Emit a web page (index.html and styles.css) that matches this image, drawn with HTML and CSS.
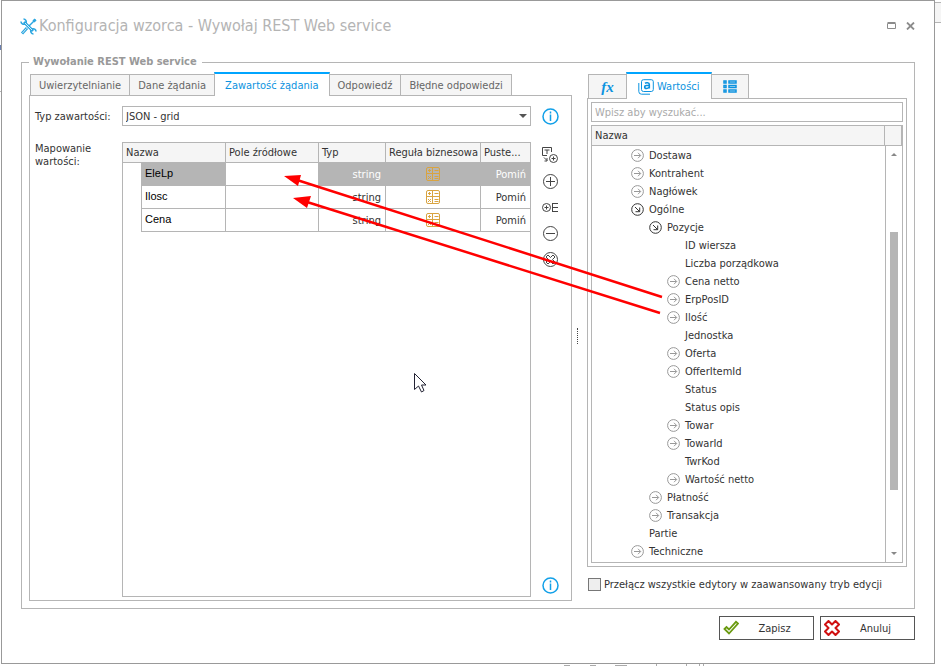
FILE: index.html
```
<!DOCTYPE html>
<html lang="pl">
    <head>
        <meta charset="UTF-8">
        <meta name="viewport" content="width=device-width, initial-scale=1.0">
        <title>Konfiguracja wzorca</title>
        <link rel="stylesheet" href="styles.css">
    </head>
    <body>
        <svg class="defs" width="0" height="0">
            <symbol id="closed" viewBox="0 0 13 13">
                <circle cx="6.5" cy="6.5" r="5.9"/>
                <path d="M3 6.5h6.5M7 3.8l2.7 2.7L7 9.2"/>
            </symbol>
            <symbol id="open" viewBox="0 0 13 13">
                <circle cx="6.5" cy="6.5" r="5.8"/>
                <path d="M4 4l4.5 4.5M8.7 4.5v4.2H4.5"/>
            </symbol>
            <symbol id="info" viewBox="0 0 17 17">
                <circle cx="8.5" cy="8.5" r="7.5"/>
                <path d="M8.5 3.5v2M8.5 6.5v6.5"/>
            </symbol>
            <symbol id="rule" viewBox="0 0 16 16">
                <rect x="1.5" y="1.5" width="13" height="13" rx="1.5"/>
                <path d="M7.5 1v14M1 7.500h14M3 4.500h3M4.500 3v3M9.500 4.500h4M3 10l3 3M6 10l-3 3M9.500 10.500h4M9.500 12.500h4"/>
            </symbol>
        </svg>
        <!-- parts of the main window that show round the dialog -->
        <div class="behind-right"></div>
        <div class="behind-left"></div>
        <svg class="behind-bottom" width="180" height="2" viewBox="0 0 180 2"><path d="M4 1.500h6M30 1.500h6M55 1.500h12M96.500 0v2M126.500 0v2M139.500 0v2M143.500 0v2"/></svg>
        <div class="dialog">
            <header class="title-bar">
                <svg class="tools" width="17" height="17" viewBox="0 0 17 17">
                    <path d="M4 4l9 9" stroke-width="3"/>
                    <path d="M1 3.500a2.800 2.800 0 0 0 4 2.500M3.500 1a2.800 2.800 0 0 1 2.500 4M11 12a2.800 2.800 0 0 0 2.500 4M12 11a2.800 2.800 0 0 1 4 2.500" stroke-width="1.600"/>
                    <path d="M15.500 1.500L8.500 8.500" stroke-width="1.500"/>
                    <path d="M13.500 1.500l2 2M7 10l-5 5.500" stroke-width="3"/>
                    <path d="M5 5l7 7M6.500 10.500l-4 4.500" stroke="#fff" stroke-width="0.800"/>
                </svg>
                <h1>Konfiguracja wzorca - Wywołaj REST Web service</h1>
                <button class="win-btn" aria-label="Maksymalizuj">
                    <svg width="9" height="7" viewBox="0 0 9 7"><path d="M.5 1.500h8v5h-8zM.5.5h8"/></svg>
                </button>
                <button class="win-btn" aria-label="Zamknij">
                    <svg width="9" height="8" viewBox="0 0 9 8"><path d="M1 .5l7 7M8 .5l-7 7" stroke-width="1.800"/></svg>
                </button>
            </header>
            <fieldset>
                <legend>Wywołanie REST Web service</legend>
                <div class="panes">
                    <section class="left">
                        <div class="tabs" role="tablist">
                            <button role="tab">Uwierzytelnianie</button>
                            <button role="tab">Dane żądania</button>
                            <button role="tab" class="active">Zawartość żądania</button>
                            <button role="tab">Odpowiedź</button>
                            <button role="tab">Błędne odpowiedzi</button>
                        </div>
                        <div class="form">
                            <label for="type">Typ zawartości:</label>
                            <div class="select-box">
                                <select id="type"><option>JSON - grid</option></select>
                            </div>
                            <button class="icon-btn info" aria-label="Informacje"><svg width="17" height="17"><use href="#info"/></svg></button>
                            <span class="map-label">Mapowanie wartości:</span>
                            <div class="grid">
                                <table>
                                    <colgroup>
                                        <col class="c-indent"><col class="c-name"><col><col class="c-type"><col class="c-rule"><col class="c-empty">
                                    </colgroup>
                                    <thead>
                                        <tr>
                                            <th colspan="2">Nazwa</th>
                                            <th>Pole źródłowe</th>
                                            <th>Typ</th>
                                            <th>Reguła biznesowa</th>
                                            <th>Puste...</th>
                                        </tr>
                                    </thead>
                                    <tbody>
                                        <tr class="selected">
                                            <td class="indent"></td>
                                            <td class="name">EleLp</td>
                                            <td class="source"></td>
                                            <td class="num">string</td>
                                            <td class="rule"><svg width="16" height="16"><use href="#rule"/></svg></td>
                                            <td class="num">Pomiń</td>
                                        </tr>
                                        <tr>
                                            <td class="indent"></td>
                                            <td class="name">Ilosc</td>
                                            <td class="source"></td>
                                            <td class="num">string</td>
                                            <td class="rule"><svg width="16" height="16"><use href="#rule"/></svg></td>
                                            <td class="num">Pomiń</td>
                                        </tr>
                                        <tr>
                                            <td class="indent"></td>
                                            <td class="name">Cena</td>
                                            <td class="source"></td>
                                            <td class="num">string</td>
                                            <td class="rule"><svg width="16" height="16"><use href="#rule"/></svg></td>
                                            <td class="num">Pomiń</td>
                                        </tr>
                                    </tbody>
                                </table>
                            </div>
                            <div class="tools-col">
                                <button class="icon-btn" aria-label="Dodaj typ">
                                    <svg width="16" height="16" viewBox="0 0 16 16"><path d="M9.500 5V.5h-9v8H5M2.500 3h5M5 3v4M2 10.500l3 3M5 11v3H2.500"/><circle cx="11.500" cy="11.500" r="4"/><path d="M9.500 11.500h4M11.500 9.500v4"/></svg>
                                </button>
                                <button class="icon-btn" aria-label="Dodaj">
                                    <svg width="15" height="15" viewBox="0 0 15 15"><circle cx="7.500" cy="7.500" r="7"/><path d="M3 7.500h9M7.500 3v9"/></svg>
                                </button>
                                <button class="icon-btn" aria-label="Dodaj do listy">
                                    <svg width="16" height="16" viewBox="0 0 16 16"><circle cx="4.500" cy="8.500" r="4"/><path d="M2.500 8.500h4M4.500 6.500v4M10.500 4v9M10.500 4.500H16M10.500 8.500H16M10.500 12.500H16"/></svg>
                                </button>
                                <button class="icon-btn" aria-label="Usuń">
                                    <svg width="15" height="15" viewBox="0 0 15 15"><circle cx="7.500" cy="7.500" r="7"/><path d="M3 7.500h9"/></svg>
                                </button>
                                <button class="icon-btn" aria-label="Usuń wszystko">
                                    <svg width="15" height="15" viewBox="0 0 15 15"><circle cx="7.500" cy="7.500" r="7"/><path d="M5 3l2.500 2.500L10 3l2 2-2.500 2.500L12 10l-2 2-2.500-2.500L5 12l-2-2 2.500-2.500L3 5z"/></svg>
                                </button>
                                <button class="icon-btn info last" aria-label="Informacje"><svg width="17" height="17"><use href="#info"/></svg></button>
                            </div>
                        </div>
                    </section>
                    <div class="splitter"></div>
                    <section class="right">
                        <div class="tabs" role="tablist">
                            <button role="tab" aria-label="Funkcje"><i class="fx">fx</i></button>
                            <button role="tab" class="active">
                                <svg width="16" height="16" viewBox="0 0 16 16"><rect x="3.500" y=".7" width="11.800" height="11.800" rx="2"/><path d="M.8 4v8.500a2.700 2.700 0 0 0 2.700 2.700H12"/><path d="M7 4.200c1-.6 4.300-.8 4.300 1.200v4M11.300 6.500H8.500c-2.400 0-2.400 3 0 3 1 0 2-.4 2.800-1.200" stroke-width="1.600"/></svg>
                                Wartości
                            </button>
                            <button role="tab" aria-label="Lista">
                                <svg width="14" height="13" viewBox="0 0 14 13"><path d="M1 1h2v2H1zM1 5.500h2v2H1zM1 10h2v2H1zM6 1h7v2H6zM6 5.500h7v2H6zM6 10h7v2H6z" stroke-width="1.500"/></svg>
                            </button>
                        </div>
                        <div class="values">
                            <input type="text" placeholder="Wpisz aby wyszukać..." aria-label="Wyszukaj">
                            <div class="tree">
                                <div class="tree-head"><span>Nazwa</span><span></span></div>
                                <div class="tree-body">
                                    <ul>
                                        <li><span class="closed">Dostawa</span></li>
                                        <li><span class="closed">Kontrahent</span></li>
                                        <li><span class="closed">Nagłówek</span></li>
                                        <li><span class="open">Ogólne</span>
                                            <ul>
                                                <li><span class="open">Pozycje</span>
                                                    <ul>
                                                        <li><span>ID wiersza</span></li>
                                                        <li><span>Liczba porządkowa</span></li>
                                                        <li><span class="closed">Cena netto</span></li>
                                                        <li><span class="closed">ErpPosID</span></li>
                                                        <li><span class="closed">Ilość</span></li>
                                                        <li><span>Jednostka</span></li>
                                                        <li><span class="closed">Oferta</span></li>
                                                        <li><span class="closed">OfferItemId</span></li>
                                                        <li><span>Status</span></li>
                                                        <li><span>Status opis</span></li>
                                                        <li><span class="closed">Towar</span></li>
                                                        <li><span class="closed">TowarId</span></li>
                                                        <li><span>TwrKod</span></li>
                                                        <li><span class="closed">Wartość netto</span></li>
                                                    </ul>
                                                </li>
                                                <li><span class="closed">Płatność</span></li>
                                                <li><span class="closed">Transakcja</span></li>
                                            </ul>
                                        </li>
                                        <li><span>Partie</span></li>
                                        <li><span class="closed">Techniczne</span></li>
                                    </ul>
                                    <div class="scroll">
                                        <i class="up"></i>
                                        <div class="track"><div class="thumb"></div></div>
                                        <i class="down"></i>
                                    </div>
                                </div>
                            </div>
                        </div>
                        <label class="check"><input type="checkbox"> Przełącz wszystkie edytory w zaawansowany tryb edycji</label>
                    </section>
                </div>
            </fieldset>
            <footer>
                <button class="btn">
                    <svg width="16" height="16" viewBox="0 0 16 16"><path d="M1.500 9l2-2L6 9.500 13 1.800l2 1.700L6 13.500z" fill="#fff" stroke="#6a9a10" stroke-width="1.800"/></svg>
                    <span>Zapisz</span>
                </button>
                <button class="btn">
                    <svg width="16" height="16" viewBox="0 0 16 16"><path d="M4.500 1L8 4.500 11.500 1 15 4.500 11.500 8l3.500 3.500-3.500 3.500L8 11.500 4.500 15 1 11.500 4.500 8 1 4.500z" fill="#fff" stroke="#d01010" stroke-width="2" stroke-linejoin="round"/></svg>
                    <span>Anuluj</span>
                </button>
            </footer>
            <!-- arrows and mouse pointer lie over the dialog -->
            <svg class="overlay" width="934" height="664" viewBox="1 0 934 664">
                <path d="M662 297L297 180M660 313L307 202" stroke="#f00" stroke-width="2.500"/>
                <path d="M284 176l17-1-3 11zM293 198l18-2-4 12z" fill="#f00"/>
                <path d="M414.500 373.500v16l4-3.500 3 6 2.500-1.500-2.500-5.500h4.500z" fill="#fff" stroke="#223"/>
            </svg>
        </div>
        <script>
            // put the expander icon in front of every tree row
            var rows = document.querySelectorAll(".tree-body li > span");
            for(var i=0;i<rows.length;i++){
                var name = rows[i].className;
                var icon = name ? '<use href="#' + name + '"/>' : '';
                rows[i].innerHTML = '<svg width="13" height="13">' + icon + '</svg>' + rows[i].innerHTML;
            }
        </script>
    </body>
</html>
```
FILE: styles.css
```
*{
    margin: 0;
    padding: 0;
    box-sizing: border-box;
}
body{
    position: relative;
    font: 11px/15px "DejaVu Sans Condensed", Tahoma, "Noto Sans", sans-serif;
    color: #333;
    background-color: #fff;
    min-height: 100vh;
    display: flex;
    padding: 0 6px 2px 1px;
}
button, input, select{
    font: inherit;
    color: inherit;
}
button{
    background: none;
    border: none;
}
svg{
    fill: none;
    stroke: currentColor;
    flex: none;
}
ul{
    list-style: none;
}
.defs{
    position: absolute;
}
.behind-right{
    position: absolute;
    right: 0;
    top: 2px;
    width: 6px;
    height: 21px;
    background-color: #f5f5f5;
    border: solid #b5b5b5;
    border-width: 1px 0;
}
.behind-left{
    position: absolute;
    left: 0;
    top: 45px;
    width: 1px;
    height: 47px;
    border-top: 5px solid #6a7fb0;
    border-bottom: 1px solid #b5b5b5;
}
.behind-bottom{
    position: absolute;
    left: 560px;
    bottom: 0;
    color: #aaa;
}
.dialog{
    position: relative;
    flex: 1;
    display: flex;
    flex-direction: column;
    border: 1px solid #999;
    padding: 0 19px 23px 19px;
}
.title-bar{
    display: flex;
    align-items: center;
    height: 50px;
    margin-bottom: 3px;
}
.tools{
    color: #2ba6e0;
    margin: 0 2px 0 -1px;
}
h1{
    flex: 1;
    font-size: 16px;
    font-weight: normal;
    line-height: 20px;
    color: #b4b4b4;
}
.win-btn{
    color: #8c8c8c;
    margin-left: 10px;
    line-height: 8px;
}
fieldset{
    flex: 1;
    display: flex;
    flex-direction: column;
    min-width: 0;
    border: 1px solid #b5b5b5;
    padding: 0 7px 7px;
}
legend{
    font-weight: bold;
    color: #999;
    line-height: 16px;
    padding: 0 5px 0 4px;
}
.panes{
    flex: 1;
    display: flex;
}
.left, .right{
    display: flex;
    flex-direction: column;
}
.left{
    flex: 1;
}
.right{
    width: 320px;
}
.tabs{
    display: flex;
    align-items: flex-end;
    padding: 2px 0 0 1px;
    margin-bottom: -1px;
}
.tabs button{
    height: 22px;
    background-color: #f5f5f5;
    border: 1px solid #b5b5b5;
    margin-right: -1px;
    padding: 0 8px;
    color: #666;
}
.tabs .active{
    position: relative;
    height: 24px;
    background-color: #fff;
    border-top: 2px solid #00a5ff;
    border-bottom: none;
    color: #0c93e0;
    padding: 0 10px;
}
.right .tabs button{
    display: flex;
    align-items: center;
    gap: 3px;
    height: 25px;
    padding: 0 11px;
    color: #0c93e0;
}
.right .tabs .active{
    height: 27px;
}
.fx{
    width: 15px;
    font: italic bold 15px/16px "Liberation Serif", serif;
}
.form{
    flex: 1;
    display: grid;
    grid-template-columns: 87px 1fr 40px;
    grid-template-rows: 20px 1fr;
    row-gap: 16px;
    border: 1px solid #b5b5b5;
    padding: 10px 0 3px 5px;
}
.form label{
    line-height: 22px;
}
.map-label{
    width: 70px;
    line-height: 13px;
}
.select-box{
    position: relative;
}
.select-box::after{
    content: "";
    position: absolute;
    right: 4px;
    top: 8px;
    border: 4px solid transparent;
    border-top-color: #555;
    border-bottom: none;
}
select{
    appearance: none;
    width: 100%;
    height: 20px;
    border: 1px solid #b5b5b5;
    background-color: #fff;
    padding-left: 3px;
}
.icon-btn{
    display: flex;
    align-items: center;
    justify-content: center;
    height: 26px;
    width: 38px;
    color: #444;
}
.info{
    color: #12a0e8;
    height: 20px;
}
.info svg{
    stroke-width: 1.5px;
}
.tools-col{
    display: flex;
    flex-direction: column;
}
.last{
    margin-top: auto;
    margin-bottom: 2px;
}
.grid{
    border: 1px solid #b5b5b5;
}
table{
    width: 100%;
    table-layout: fixed;
    border-collapse: separate;
    border-spacing: 0;
}
.c-indent{
    width: 19px;
}
.c-name{
    width: 84px;
}
.c-type{
    width: 67px;
}
.c-rule{
    width: 95px;
}
.c-empty{
    width: 49px;
}
th{
    height: 20px;
    background-color: #f5f5f5;
    border-right: 1px solid #b5b5b5;
    border-bottom: 1px solid #b5b5b5;
    font-weight: normal;
    text-align: left;
    padding-left: 3px;
    white-space: nowrap;
}
td{
    height: 23px;
    border-right: 1px solid #b5b5b5;
    border-bottom: 1px solid #b5b5b5;
}
th:last-child, td:last-child{
    border-right: none;
}
.indent{
    border-bottom: none;
}
.name{
    font-family: "Liberation Sans", sans-serif;
    color: #000;
    padding: 0 0 2px 3px;
}
.num{
    text-align: right;
    padding: 0 4px 0 0;
}
.rule{
    color: #d9a441;
    text-align: center;
}
.rule svg{
    display: block;
    margin: 0 auto;
}
.selected td{
    background-color: #b5b5b5;
}
.selected .num{
    color: #fff;
}
.selected .indent, .selected .source{
    background-color: #fff;
}
.splitter{
    width: 15px;
    display: flex;
    align-items: center;
    padding-left: 5px;
}
.splitter::before{
    content: "";
    height: 16px;
    border-left: 1px dotted #444;
}
.values{
    flex: 1;
    display: flex;
    flex-direction: column;
    border: 1px solid #b5b5b5;
    padding: 3px;
}
.values input{
    width: 100%;
    height: 20px;
    border: 1px solid #b5b5b5;
    padding: 0 3px;
}
.values input::placeholder{
    color: #aaa;
}
.tree{
    flex: 1;
    display: flex;
    flex-direction: column;
    border: 1px solid #b5b5b5;
    margin-top: 3px;
}
.tree-head{
    display: flex;
    height: 20px;
    line-height: 19px;
    background-color: #f5f5f5;
    border-bottom: 1px solid #b5b5b5;
    padding-left: 3px;
}
.tree-head span{
    width: 18px;
    border: solid #b5b5b5;
    border-width: 0 1px;
}
.tree-head span:first-child{
    flex: 1;
    border: none;
}
.tree-body{
    flex: 1;
    display: flex;
}
.tree-body > ul{
    flex: 1;
    padding-left: 39px;
}
.tree-body ul ul{
    padding-left: 18px;
}
.tree-body li > span{
    display: flex;
    align-items: center;
    gap: 5px;
    height: 18px;
}
.tree-body .closed svg{
    color: #999;
}
.scroll{
    width: 17px;
    display: flex;
    flex-direction: column;
    align-items: center;
    border-left: 1px solid #b5b5b5;
    padding: 7px 0;
}
.scroll i{
    border: 3px solid transparent;
}
.up{
    border-top: none !important;
    border-bottom-color: #888 !important;
}
.down{
    border-bottom: none !important;
    border-top-color: #888 !important;
}
.track{
    flex: 1;
    display: flex;
    align-items: flex-end;
    padding-bottom: 62px;
}
.thumb{
    width: 8px;
    height: 258px;
    background-color: #b5b5b5;
}
.check{
    display: flex;
    align-items: center;
    gap: 3px;
    height: 34px;
    padding-left: 1px;
    white-space: nowrap;
}
.check input{
    appearance: none;
    width: 13px;
    height: 13px;
    border: 1px solid #777;
    background-color: #eee;
}
footer{
    display: flex;
    justify-content: flex-end;
    gap: 6px;
    padding-top: 7px;
}
.btn{
    display: flex;
    align-items: center;
    width: 95px;
    height: 24px;
    border: 1px solid #555;
    padding: 0 3px;
}
.btn span{
    flex: 1;
    text-align: center;
}
.overlay{
    position: absolute;
    left: -1px;
    top: -1px;
    stroke: none;
    pointer-events: none;
}
```
